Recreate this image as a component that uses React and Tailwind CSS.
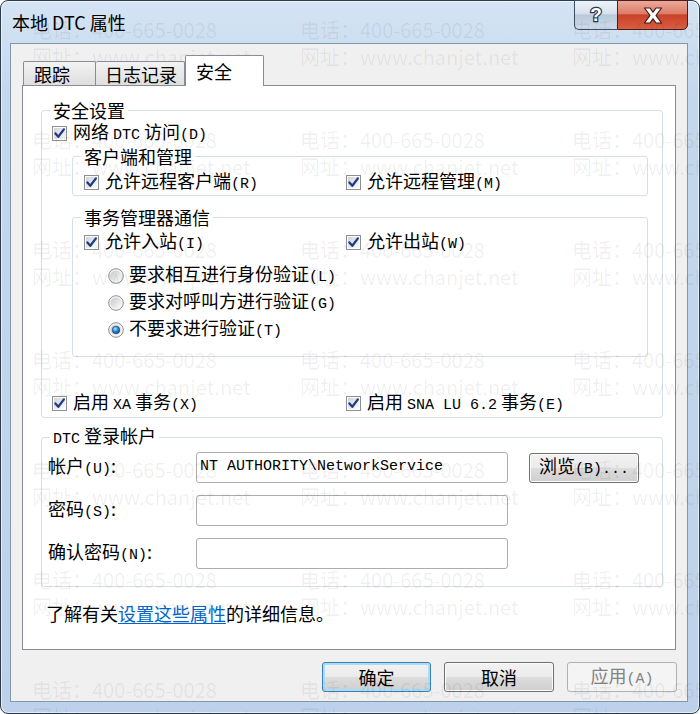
import React from "react";

// ascii parts of the labels use a narrow mono face, like the old dialog font
function M({ children }) {
  return <span className="font-['Liberation_Mono','Noto_Sans_CJK_SC',monospace] text-[15px]">{children}</span>;
}

function Check() {
  return (
    <svg width="15" height="15" viewBox="0 0 15 15" className="shrink-0">
      <defs>
        <linearGradient id="cbg" x1="0" y1="0" x2="1" y2="1">
          <stop offset="0" stopColor="#cfd3d9" />
          <stop offset="1" stopColor="#fbfbfb" />
        </linearGradient>
      </defs>
      <rect x="0.5" y="0.5" width="14" height="14" fill="#fdfdfd" stroke="#8e8f8f" />
      <rect x="2" y="2" width="11" height="11" fill="url(#cbg)" />
      <path d="M3.4 7.4 L6.3 10.8 L11.9 3.4" fill="none" stroke="#1f3c86" strokeWidth="2.3" strokeLinecap="round" strokeLinejoin="round" />
    </svg>
  );
}

function Radio({ on }) {
  return (
    <svg width="16" height="16" viewBox="0 0 16 16" className="shrink-0">
      <defs>
        <linearGradient id="rbg" x1="0" y1="0" x2="1" y2="1">
          <stop offset="0" stopColor="#c4c8ce" />
          <stop offset="1" stopColor="#fbfbfb" />
        </linearGradient>
        <radialGradient id="rdot" cx="0.4" cy="0.35" r="0.7">
          <stop offset="0" stopColor="#b5e6fc" />
          <stop offset="0.5" stopColor="#2b8ad2" />
          <stop offset="1" stopColor="#0c3c78" />
        </radialGradient>
      </defs>
      <circle cx="8" cy="8" r="7.3" fill="#f6f6f6" stroke="#8e8f8f" />
      <circle cx="8" cy="8" r="5.6" fill="url(#rbg)" />
      {on && <circle cx="8" cy="8" r="3.8" fill="url(#rdot)" stroke="#1a3f73" strokeWidth="0.6" />}
    </svg>
  );
}

function CheckRow({ children }) {
  return (
    <div className="flex items-center h-[26px] gap-[6px] whitespace-nowrap">
      <Check />
      <span className="leading-[20px]">{children}</span>
    </div>
  );
}

function RadioRow({ on, children }) {
  return (
    <div className="flex items-center h-[27px] gap-[5px] whitespace-nowrap">
      <Radio on={on} />
      <span className="leading-[20px]">{children}</span>
    </div>
  );
}

function Group({ title, className, children }) {
  return (
    <fieldset className={"border border-[#d5dfe5] rounded-[3px] " + className}>
      <legend className="ml-[8px] px-[3px] leading-[20px] whitespace-nowrap">{title}</legend>
      {children}
    </fieldset>
  );
}

const btn =
  "h-[30px] w-[110px] flex items-center justify-center rounded-[3px] border border-[#707070] bg-[linear-gradient(180deg,#f2f2f2_0%,#ebebeb_50%,#dddddd_50%,#cfcfcf_100%)] shadow-[inset_0_0_0_1px_#fcfcfc]";

export default function App() {
  const marks = [0, 1, 2, 3, 4, 5, 6];

  return (
    <div className="relative w-[700px] h-[714px] overflow-hidden bg-white font-['Noto_Sans_CJK_SC',sans-serif] text-[18px] text-black">
      <div className="flex flex-col w-full h-full rounded-[8px] border border-[#2e3b4a] bg-[linear-gradient(180deg,#d5e4f4_0%,#c3d7ed_14%,#bdd2ea_100%)] shadow-[inset_0_0_0_1px_rgba(255,255,255,0.6)]">
        {/* title bar */}
        <div className="flex h-[42px] shrink-0">
          <div className="pl-[11px] pt-[9px] leading-[24px]">本地 DTC 属性</div>
          <div className="ml-auto mr-[11px] -mt-px flex h-[30px]">
            <div className="w-[43px] h-full flex items-center justify-center border border-[#3d4e62] border-r-0 rounded-bl-[5px] bg-[linear-gradient(180deg,#eef3f9_0%,#d6e1ec_45%,#b8c9db_50%,#d0dcea_100%)]">
              <svg width="18" height="22" viewBox="0 0 18 22">
                <text x="9" y="17" textAnchor="middle" fontSize="19" fontWeight="bold" fontFamily="Liberation Sans, sans-serif" fill="#fff" stroke="#26384c" strokeWidth="2.4" paintOrder="stroke">?</text>
              </svg>
            </div>
            <div className="w-[71px] h-full flex items-center justify-center border border-[#4b1d16] rounded-br-[5px] bg-[linear-gradient(180deg,#eba99b_0%,#dc7d69_45%,#c8422a_50%,#d95e43_100%)]">
              <svg width="22" height="17" viewBox="0 0 22 17">
                <polygon points="2.5,1 8,1 11,5.2 14,1 19.5,1 14,8.5 19.5,16 14,16 11,11.8 8,16 2.5,16 8,8.5" fill="#fff" stroke="#3c1a14" strokeWidth="1.2" strokeLinejoin="round" />
              </svg>
            </div>
          </div>
        </div>

        {/* client area */}
        <div className="flex-1 ml-[9px] mr-[11px] mb-[11px] flex flex-col border border-[#8596aa] bg-[#f0f0f0]">
          {/* tabs */}
          <div className="relative z-10 -mb-px ml-[12px] mt-[11px] flex items-end h-[31px]">
            <div className="mb-px h-[24px] w-[73px] pl-[10px] flex items-center rounded-t-[2px] border border-b-0 border-[#898c95] bg-[linear-gradient(180deg,#f3f3f3_0%,#e9e9e9_50%,#dedede_100%)] leading-[20px]">
              跟踪
            </div>
            <div className="mb-px h-[24px] w-[89px] pl-[9px] flex items-center rounded-t-[2px] border border-b-0 border-l-0 border-[#898c95] bg-[linear-gradient(180deg,#f3f3f3_0%,#e9e9e9_50%,#dedede_100%)] leading-[20px]">
              日志记录
            </div>
            <div className="h-[31px] w-[79px] pl-[10px] flex items-center rounded-t-[2px] border border-b-0 border-[#898c95] bg-white leading-[20px]">
              安全
            </div>
          </div>

          {/* tab panel */}
          <div className="mx-[11px] h-[565px] shrink-0 border border-[#898c95] bg-white flex flex-col">
            <Group title="安全设置" className="ml-[18px] mr-[12px] mt-[14px]">
              <div className="pl-[10px] pb-px">
                <CheckRow>
                  网络 <M>DTC</M> 访问<M>(D)</M>
                </CheckRow>

                <Group title="客户端和管理" className="ml-[20px] mr-[14px]">
                  <div className="pl-[11px] pt-[3px] grid grid-cols-[262px_1fr]">
                    <CheckRow>
                      允许远程客户端<M>(R)</M>
                    </CheckRow>
                    <CheckRow>
                      允许远程管理<M>(M)</M>
                    </CheckRow>
                  </div>
                </Group>

                <Group title="事务管理器通信" className="ml-[20px] mr-[14px] mt-[11px]">
                  <div className="pl-[11px] pt-[2px] pb-[13px]">
                    <div className="grid grid-cols-[262px_1fr]">
                      <CheckRow>
                        允许入站<M>(I)</M>
                      </CheckRow>
                      <CheckRow>
                        允许出站<M>(W)</M>
                      </CheckRow>
                    </div>
                    <div className="mt-[7px] pl-[24px]">
                      <RadioRow>
                        要求相互进行身份验证<M>(L)</M>
                      </RadioRow>
                      <RadioRow>
                        要求对呼叫方进行验证<M>(G)</M>
                      </RadioRow>
                      <RadioRow on>
                        不要求进行验证<M>(T)</M>
                      </RadioRow>
                    </div>
                  </div>
                </Group>

                <div className="mt-[33px] grid grid-cols-[294px_1fr]">
                  <CheckRow>
                    启用 <M>XA</M> 事务<M>(X)</M>
                  </CheckRow>
                  <CheckRow>
                    启用 <M>SNA LU 6.2</M> 事务<M>(E)</M>
                  </CheckRow>
                </div>
              </div>
            </Group>

            <Group title={<><M>DTC</M> 登录帐户</>} className="ml-[18px] mr-[12px] mt-[7px]">
              <div className="pl-[6px] pt-[2px] pb-[17px] flex flex-col gap-[12px]">
                <div className="flex items-center">
                  <div className="w-[148px] leading-[20px]">
                    帐户<M>(U)</M>:
                  </div>
                  <div className="w-[312px] h-[31px] pl-[3px] flex items-center rounded-[3px] border border-[#abadb3] bg-white font-['Liberation_Mono',monospace] text-[15px] whitespace-nowrap">
                    {"NT AUTHORITY\\NetworkService"}
                  </div>
                  <div className={btn + " ml-[21px] h-[28px]"}>
                    <span className="leading-[20px]">
                      浏览<M>(B)...</M>
                    </span>
                  </div>
                </div>
                <div className="flex items-center">
                  <div className="w-[148px] leading-[20px]">
                    密码<M>(S)</M>:
                  </div>
                  <div className="w-[312px] h-[31px] rounded-[3px] border border-[#abadb3] bg-white" />
                </div>
                <div className="flex items-center">
                  <div className="w-[148px] leading-[20px]">
                    确认密码<M>(N)</M>:
                  </div>
                  <div className="w-[312px] h-[31px] rounded-[3px] border border-[#abadb3] bg-white" />
                </div>
              </div>
            </Group>

            <div className="ml-[23px] mt-[14px] leading-[24px] whitespace-nowrap">
              了解有关<span className="text-[#0066cc] underline underline-offset-2">设置这些属性</span>的详细信息。
            </div>
          </div>

          {/* dialog buttons */}
          <div className="mt-[12px] mr-[10px] flex justify-end gap-[13px]">
            <div className="h-[30px] w-[109px] flex items-center justify-center rounded-[3px] border border-[#3c7fb1] bg-[linear-gradient(180deg,#f2f2f2_0%,#ebebeb_50%,#dddddd_50%,#cfcfcf_100%)] shadow-[inset_0_0_0_2px_#a9dcf6]">
              确定
            </div>
            <div className={btn}>取消</div>
            <div className="h-[30px] w-[110px] flex items-center justify-center rounded-[3px] border border-[#adb2b5] bg-[#f4f4f4] text-[#838383]">
              <span>
                应用<M>(A)</M>
              </span>
            </div>
          </div>
        </div>
      </div>

      {/* watermark */}
      <div className="pointer-events-none absolute inset-0 pt-[16px] pl-[32px] text-[20px] leading-[27px] text-black/[0.065] whitespace-nowrap">
        {marks.map((i) => (
          <div key={i} className="h-[110px]">
            <div className="flex">
              <span className="w-[268px] shrink-0">电话：400-665-0028</span>
              <span className="w-[272px] shrink-0">电话：400-665-0028</span>
              <span>电话：400-665-0028</span>
            </div>
            <div className="flex">
              <span className="w-[268px] shrink-0">网址：www.chanjet.net</span>
              <span className="w-[272px] shrink-0">网址：www.chanjet.net</span>
              <span>网址：www.chanjet.net</span>
            </div>
          </div>
        ))}
      </div>
    </div>
  );
}
